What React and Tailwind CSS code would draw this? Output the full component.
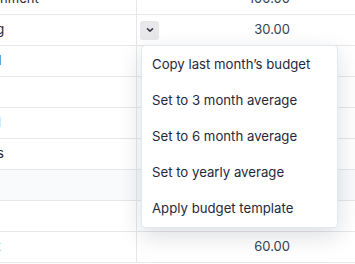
import React from 'react';

const rows = [
  { name: 'Entertainment', amount: '100.00' },
  { name: 'Clothing', amount: '30.00', menu: true },
  { name: 'Medical', amount: '45.00' },
  { name: 'Pets', amount: '20.00' },
  { name: 'General', amount: '25.00' },
  { name: 'Hobbies', amount: '120.00' },
  { name: '', amount: '', group: true },
  { name: 'Rent', amount: '900.00' },
  { name: 'Internet', amount: '60.00' },
];

const menuItems = [
  'Copy last month’s budget',
  'Set to 3 month average',
  'Set to 6 month average',
  'Set to yearly average',
  'Apply budget template',
];

function Chevron() {
  return (
    <svg width="10" height="10" viewBox="0 0 10 10" fill="none">
      <path d="M2.5 3.8 5 6.2 7.5 3.8" stroke="#374151" strokeWidth="1.6" strokeLinecap="round" strokeLinejoin="round" />
    </svg>
  );
}

function BudgetMenu() {
  return (
    <div className="absolute left-[1px] top-[24px] z-10 w-[197px] rounded-[4px] border border-[#e2e8f0] bg-white pt-[1px] shadow-[0_8px_24px_rgba(15,23,42,0.14)]">
      {menuItems.map((item) => (
        <div key={item} className="flex h-[36px] items-center px-[10px] text-[13.2px] text-[#1e293b] whitespace-nowrap">
          {item}
        </div>
      ))}
    </div>
  );
}

export default function App() {
  return (
    <div className="relative h-[264px] w-[355px] overflow-hidden bg-white" style={{ fontFamily: 'Inter, sans-serif' }}>
      <div className="-mt-[16px] -ml-[47px] w-[460px]">
        {rows.map((row, i) => (
          <div
            key={i}
            className={`flex h-[31px] border-b border-[#e5e7eb] ${row.group ? 'bg-[#f8fafc]' : 'bg-white'}`}
          >
            <div className="flex w-[184px] items-center border-r border-[#e5e7eb] text-[13px] text-[#1f2937] whitespace-nowrap">
              {row.name}
            </div>
            <div className="flex w-[165px] items-center pl-[3px] pr-[12px]">
              {row.menu && (
                <div className="relative">
                  <button className="flex h-[19px] w-[19px] items-center justify-center rounded-[3px] bg-[#e8e8ea]">
                    <Chevron />
                  </button>
                  <BudgetMenu />
                </div>
              )}
              <span className="ml-auto text-[13px] text-[#374151]">{row.amount}</span>
            </div>
          </div>
        ))}
      </div>
    </div>
  );
}
